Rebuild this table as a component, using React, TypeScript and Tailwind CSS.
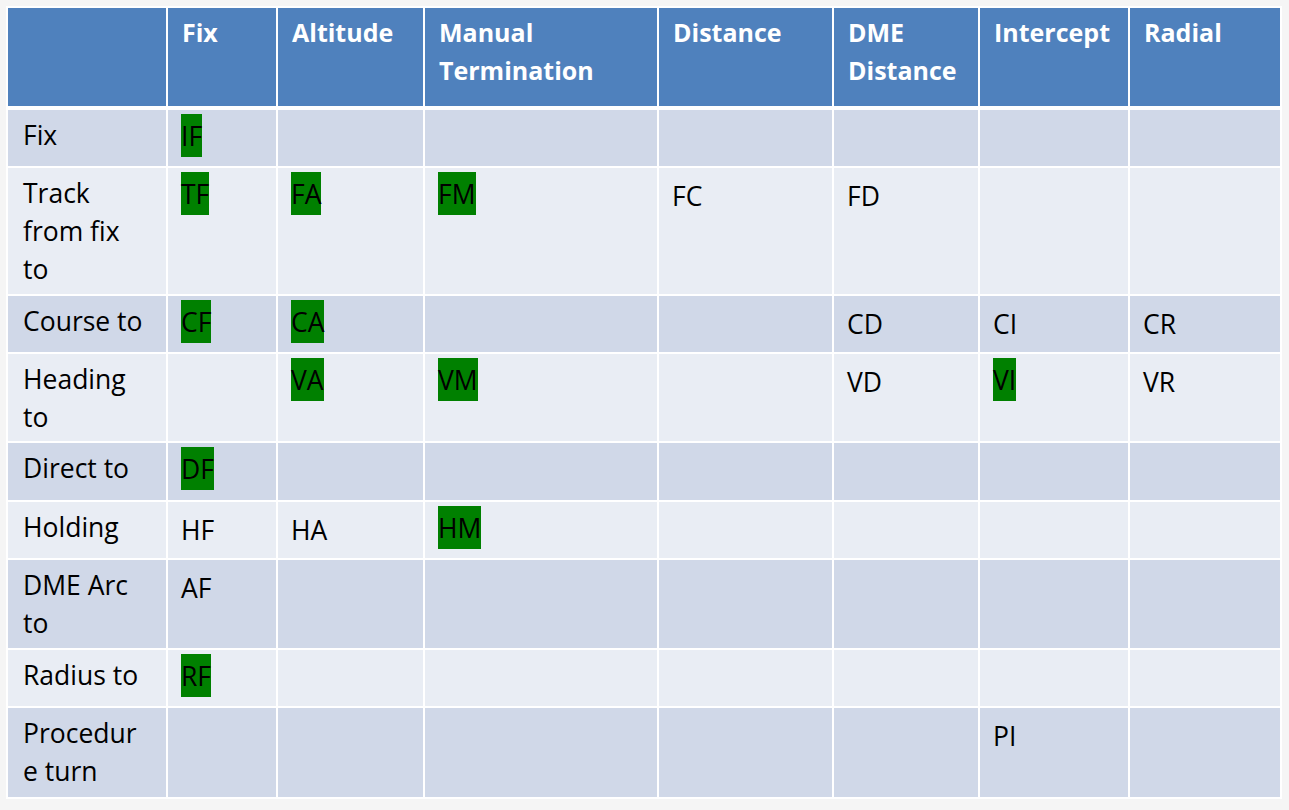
const headers: React.ReactNode[] = ["", "Fix", "Altitude", <>Manual<br />Termination</>, "Distance", <>DME<br />Distance</>, "Intercept", "Radial"];

type Cell = { t: string; g?: boolean } | null;

const rows: { label: React.ReactNode; h: string; dark: boolean; cells: Cell[] }[] = [
  { label: "Fix", h: "h-[56px]", dark: true, cells: [{ t: "IF", g: true }, null, null, null, null, null, null] },
  { label: <>Track<br />from fix<br />to</>, h: "h-[126px]", dark: false, cells: [{ t: "TF", g: true }, { t: "FA", g: true }, { t: "FM", g: true }, { t: "FC" }, { t: "FD" }, null, null] },
  { label: "Course to", h: "h-[56px]", dark: true, cells: [{ t: "CF", g: true }, { t: "CA", g: true }, null, null, { t: "CD" }, { t: "CI" }, { t: "CR" }] },
  { label: <>Heading<br />to</>, h: "h-[87px]", dark: false, cells: [null, { t: "VA", g: true }, { t: "VM", g: true }, null, { t: "VD" }, { t: "VI", g: true }, { t: "VR" }] },
  { label: "Direct to", h: "h-[57px]", dark: true, cells: [{ t: "DF", g: true }, null, null, null, null, null, null] },
  { label: "Holding", h: "h-[56px]", dark: false, cells: [{ t: "HF" }, { t: "HA" }, { t: "HM", g: true }, null, null, null, null] },
  { label: <>DME Arc<br />to</>, h: "h-[88px]", dark: true, cells: [{ t: "AF" }, null, null, null, null, null, null] },
  { label: "Radius to", h: "h-[56px]", dark: false, cells: [{ t: "RF", g: true }, null, null, null, null, null, null] },
  { label: <>Procedur<br />e turn</>, h: "h-[89px]", dark: true, cells: [null, null, null, null, null, { t: "PI" }, null] },
];

const cols = "grid grid-cols-[158px_108px_145px_232px_173px_144px_148px_150px] gap-[2px]";

export default function App() {
  return (
    <div className="min-h-screen bg-[#f5f5f5] pt-[6px] pl-[6px]" style={{ fontFamily: '"Open Sans", "Liberation Sans", sans-serif' }}>
      <div className="inline-flex flex-col gap-[2px] bg-white p-[2px]">
        {/* header */}
        <div className={`${cols} h-[98px] mb-[2px]`}>
          {headers.map((h, i) => (
            <div key={i} className="bg-[#4f81bd] text-white font-bold text-[25px] leading-[38px] pl-[14px] pt-[5px] whitespace-nowrap">
              {h}
            </div>
          ))}
        </div>

        {rows.map((r, ri) => (
          <div key={ri} className={`${cols} ${r.h}`}>
            <div className={`${r.dark ? "bg-[#d0d8e8]" : "bg-[#e9edf4]"} text-black text-[26.5px] leading-[38px] pl-[15px] pt-[6px] whitespace-nowrap`}>
              {r.label}
            </div>
            {r.cells.map((c, ci) => (
              <div key={ci} className={`${r.dark ? "bg-[#d0d8e8]" : "bg-[#e9edf4]"} text-black text-[26.5px] leading-[38px] pl-[13px] pt-[9px]`}>
                {c && (c.g ? (
                  <span className="inline-block bg-[#008000] pt-[2px] leading-[41px] -mt-[5px] align-top">{c.t}</span>
                ) : (
                  <span>{c.t}</span>
                ))}
              </div>
            ))}
          </div>
        ))}
      </div>
    </div>
  );
}
